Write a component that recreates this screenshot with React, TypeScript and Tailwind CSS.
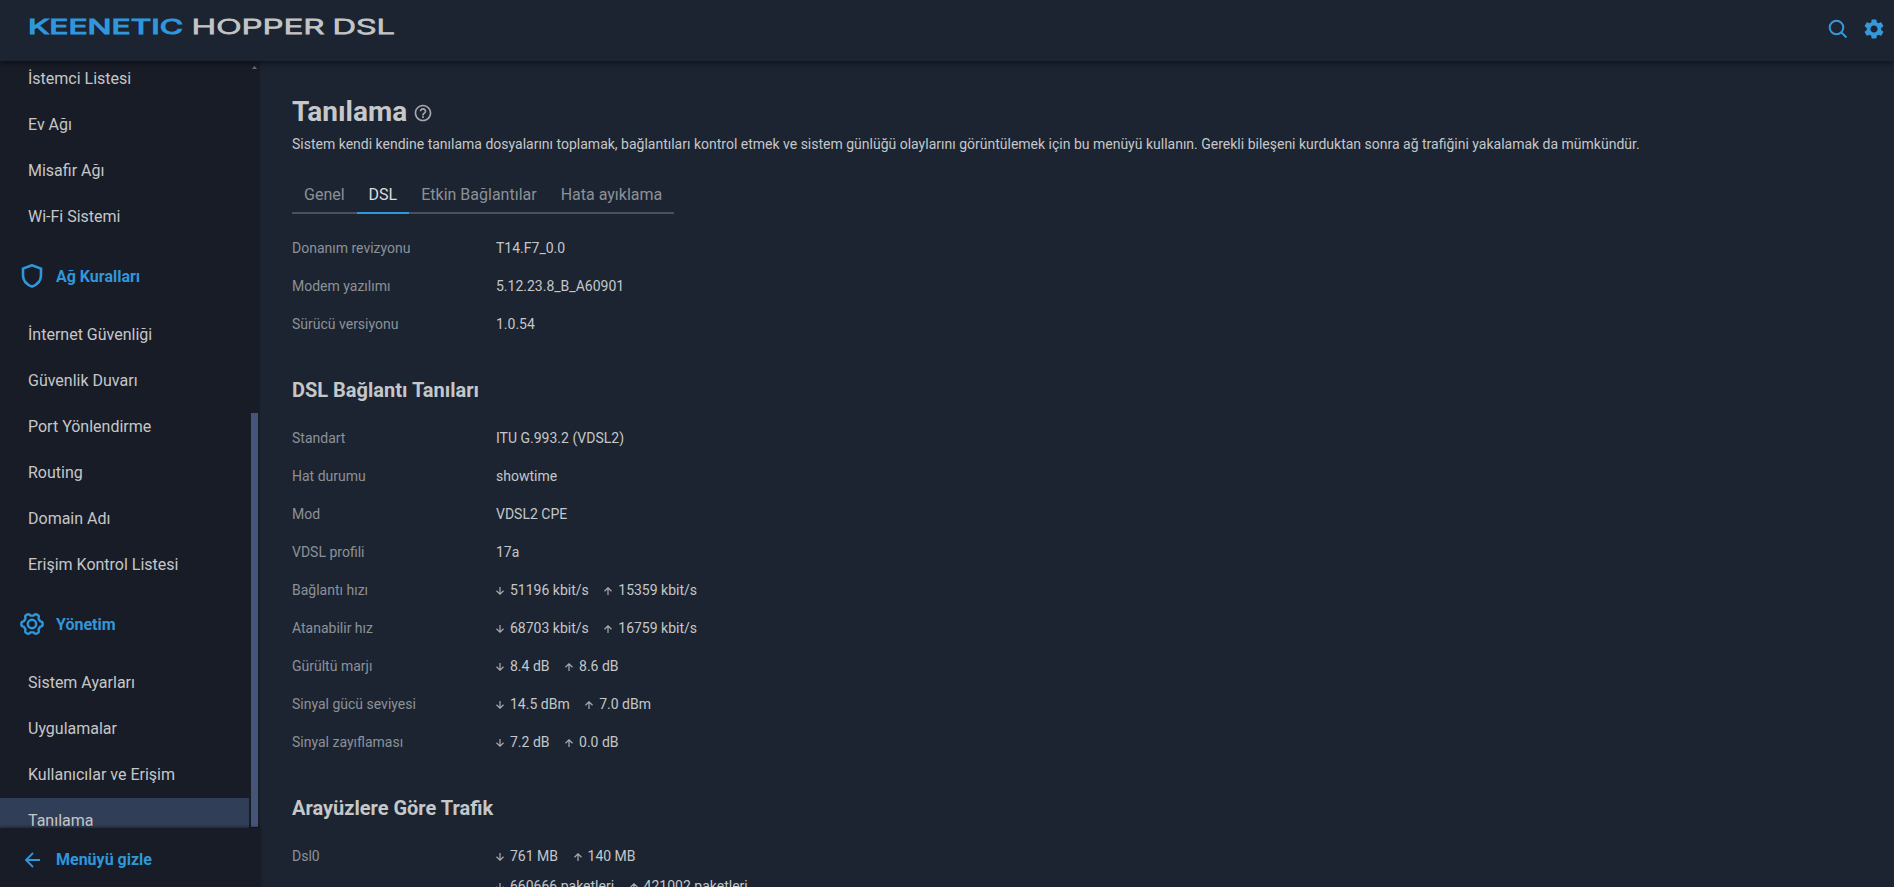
import React from 'react';
import { MdHelpOutline, MdSettings } from 'react-icons/md';

interface Rate {
  down: string;
  up: string;
}

interface DetailRow {
  label: string;
  value: string | Rate;
}

interface NavGroup {
  title?: string;
  icon?: React.ReactNode;
  items: string[];
}

const hardware: DetailRow[] = [
  { label: 'Donanım revizyonu', value: 'T14.F7_0.0' },
  { label: 'Modem yazılımı', value: '5.12.23.8_B_A60901' },
  { label: 'Sürücü versiyonu', value: '1.0.54' }
];

const diagnostics: DetailRow[] = [
  { label: 'Standart', value: 'ITU G.993.2 (VDSL2)' },
  { label: 'Hat durumu', value: 'showtime' },
  { label: 'Mod', value: 'VDSL2 CPE' },
  { label: 'VDSL profili', value: '17a' },
  { label: 'Bağlantı hızı', value: { down: '51196 kbit/s', up: '15359 kbit/s' } },
  { label: 'Atanabilir hız', value: { down: '68703 kbit/s', up: '16759 kbit/s' } },
  { label: 'Gürültü marjı', value: { down: '8.4 dB', up: '8.6 dB' } },
  { label: 'Sinyal gücü seviyesi', value: { down: '14.5 dBm', up: '7.0 dBm' } },
  { label: 'Sinyal zayıflaması', value: { down: '7.2 dB', up: '0.0 dB' } }
];

const tabs = ['Genel', 'DSL', 'Etkin Bağlantılar', 'Hata ayıklama'];

const ShieldIcon = () => (
  <svg className="w-6 h-6" viewBox="0 0 24 24" fill="none" stroke="currentColor" strokeWidth="2.6">
    <path d="M12 1.300 3 4.600v6.600c0 5.200 3.600 9.300 9 11.400 5.400-2.100 9-6.200 9-11.400V4.600z" />
  </svg>
);

// Six-lobed gear outline
const gearPath = Array.from({ length: 120 }, (_, i) => {
  const a = (i / 120) * Math.PI * 2;
  const c = Math.cos(6 * a);
  const r = 9.5 + 1.2 * Math.tanh(2 * c);
  return `${i ? 'L' : 'M'}${(12 + r * Math.cos(a)).toFixed(2)} ${(12 + r * Math.sin(a)).toFixed(2)}`;
}).join('') + 'Z';

const GearIcon = () => (
  <svg className="w-6 h-6" viewBox="0 0 24 24" fill="none" stroke="currentColor" strokeWidth="2.4" strokeLinejoin="round">
    <path d={gearPath} />
    <circle cx="12" cy="12" r="4.2" />
  </svg>
);

const navGroups: NavGroup[] = [
  { items: ['İstemci Listesi', 'Ev Ağı', 'Misafir Ağı', 'Wi-Fi Sistemi'] },
  {
    title: 'Ağ Kuralları',
    icon: <ShieldIcon />,
    items: [
      'İnternet Güvenliği',
      'Güvenlik Duvarı',
      'Port Yönlendirme',
      'Routing',
      'Domain Adı',
      'Erişim Kontrol Listesi'
    ]
  },
  {
    title: 'Yönetim',
    icon: <GearIcon />,
    items: ['Sistem Ayarları', 'Uygulamalar', 'Kullanıcılar ve Erişim', 'Tanılama']
  }
];

const Arrow: React.FC<{ up?: boolean }> = ({ up }) => (
  <svg
    className={`w-2 h-2 mr-1.5 mt-0.5 text-[#a9abae] ${up ? '' : 'rotate-180'}`}
    viewBox="0 0 8 8"
    fill="none"
    stroke="currentColor"
    strokeWidth="1.2"
  >
    <path d="M4 8V.8M.5 4.200 4 .8l3.500 3.400" />
  </svg>
);

const RateValue: React.FC<Rate> = ({ down, up }) => (
  <div className="flex items-center">
    <Arrow />
    <span>{down}</span>
    <span className="w-[15.5px]" />
    <Arrow up />
    <span>{up}</span>
  </div>
);

const Details: React.FC<{ rows: DetailRow[] }> = ({ rows }) => (
  <div>
    {rows.map(row => (
      <div key={row.label} className="flex items-center h-[38px] text-sm">
        <div className="w-[204px] text-[#8c9198]">{row.label}</div>
        {typeof row.value === 'string' ? <div>{row.value}</div> : <RateValue {...row.value} />}
      </div>
    ))}
  </div>
);

const Header = () => (
  <header className="relative z-10 flex justify-between shrink-0 h-[61px] pl-[28px] pr-2 bg-[#1c2431] shadow-[0_2px_6px_rgba(0,0,0,0.5)]">
    <svg className="w-[370px] h-[50px]" viewBox="0 0 370 50" fontFamily="Inter, sans-serif" fontSize="20.500">
      <g fill="#2f97dc" stroke="#2f97dc" strokeWidth="1.1" fontWeight="400">
        <text x="0" y="33.500" textLength="155" lengthAdjust="spacingAndGlyphs">KEENETIC</text>
      </g>
      <g fill="#c3c4c5" stroke="#c3c4c5" strokeWidth="1" fontWeight="300">
        <text x="163.500" y="33.500" textLength="133" lengthAdjust="spacingAndGlyphs">HOPPER</text>
        <text x="304.500" y="33.500" textLength="62.500" lengthAdjust="spacingAndGlyphs">DSL</text>
      </g>
    </svg>
    <div className="flex items-center h-[58px] gap-[14px] text-[#3498db]">
      <svg className="w-5 h-5" viewBox="0 0 20 20" fill="none" stroke="currentColor" strokeWidth="2">
        <circle cx="8.500" cy="8.500" r="6.800" />
        <path d="m13.200 13.200 5.300 5.300" />
      </svg>
      <MdSettings className="w-6 h-6" />
    </div>
  </header>
);

const Sidebar = () => (
  <aside className="flex flex-col shrink-0 w-[260px] bg-[#181c26]">
    <div className="flex flex-1 min-h-0 overflow-hidden">
      <nav className="w-[249px] -mt-[5px]">
        {navGroups.map((group, i) => (
          <div key={i}>
            {group.title && (
              <div className="flex items-center h-[72px] pl-5 gap-3 font-bold text-[#2f97dc]">
                {group.icon}
                <span className="pt-0.5">{group.title}</span>
              </div>
            )}
            {group.items.map(item => (
              <div
                key={item}
                className={`flex items-center h-[46px] pl-7 ${item === 'Tanılama' ? 'bg-[#313e57]' : ''}`}
              >
                {item}
              </div>
            ))}
          </div>
        ))}
      </nav>
      {/* Scrollbar */}
      <div className="flex flex-col items-center justify-between w-[7px] ml-[2px]">
        <svg className="w-[5px] h-[3px] mt-[5px]" viewBox="0 0 5 3" fill="#6b6e75">
          <path d="M0 3h5L2.500 0z" />
        </svg>
        <div className="w-[7px] h-[414px] mb-px bg-[#455479]" />
      </div>
    </div>
    <div className="flex items-center h-[59px] pt-1 pl-6 gap-3.5 font-bold text-[#2f97dc] shadow-[0_-1px_3px_rgba(0,0,0,0.4)]">
      <svg className="w-[18px] h-[18px]" viewBox="0 0 18 18" fill="none" stroke="currentColor" strokeWidth="1.800">
        <path d="M16 9H2.500M9 2 2 9l7 7" />
      </svg>
      <span>Menüyü gizle</span>
    </div>
  </aside>
);

export default function App() {
  return (
    <div className="flex flex-col w-full h-screen overflow-hidden bg-[#1c2431] text-[#c5c7c9] font-['Roboto',sans-serif]">
      <Header />
      <div className="flex flex-1 min-h-0">
        <Sidebar />
        <main className="flex-1 min-w-0 overflow-hidden pl-8 pt-[33px]">
          <div className="flex items-center h-9 gap-1.5">
            <h1 className="text-[28px] font-bold">Tanılama</h1>
            <MdHelpOutline className="w-5 h-5 mt-0.5 text-[#a5a8ac]" />
          </div>
          <p className="mt-1 h-5 text-sm leading-5 whitespace-nowrap">
            Sistem kendi kendine tanılama dosyalarını toplamak, bağlantıları kontrol etmek ve sistem günlüğü olaylarını görüntülemek için bu menüyü kullanın. Gerekli bileşeni kurduktan sonra ağ trafiğini yakalamak da mümkündür.
          </p>
          <div className="flex w-[382px] h-9 mt-6 border-b-2 border-[#4b515c]">
            {tabs.map(tab => (
              <div
                key={tab}
                className={`h-9 px-3 pt-[5px] whitespace-nowrap ${
                  tab === 'DSL' ? 'border-b-2 border-[#2f97dc] text-[#dcdddf]' : 'text-[#8c9198]'
                }`}
              >
                {tab}
              </div>
            ))}
          </div>
          <div className="mt-[15px]">
            <Details rows={hardware} />
          </div>
          <h2 className="mt-[33px] mb-[15px] text-xl leading-7 font-bold">DSL Bağlantı Tanıları</h2>
          <Details rows={diagnostics} />
          <h2 className="mt-[33px] mb-[15px] text-xl leading-7 font-bold">Arayüzlere Göre Trafik</h2>
          <Details rows={[{ label: 'Dsl0', value: { down: '761 MB', up: '140 MB' } }]} />
          <div className="ml-[204px] mt-px text-sm">
            <RateValue down="660666 paketleri" up="421002 paketleri" />
          </div>
        </main>
      </div>
    </div>
  );
}
